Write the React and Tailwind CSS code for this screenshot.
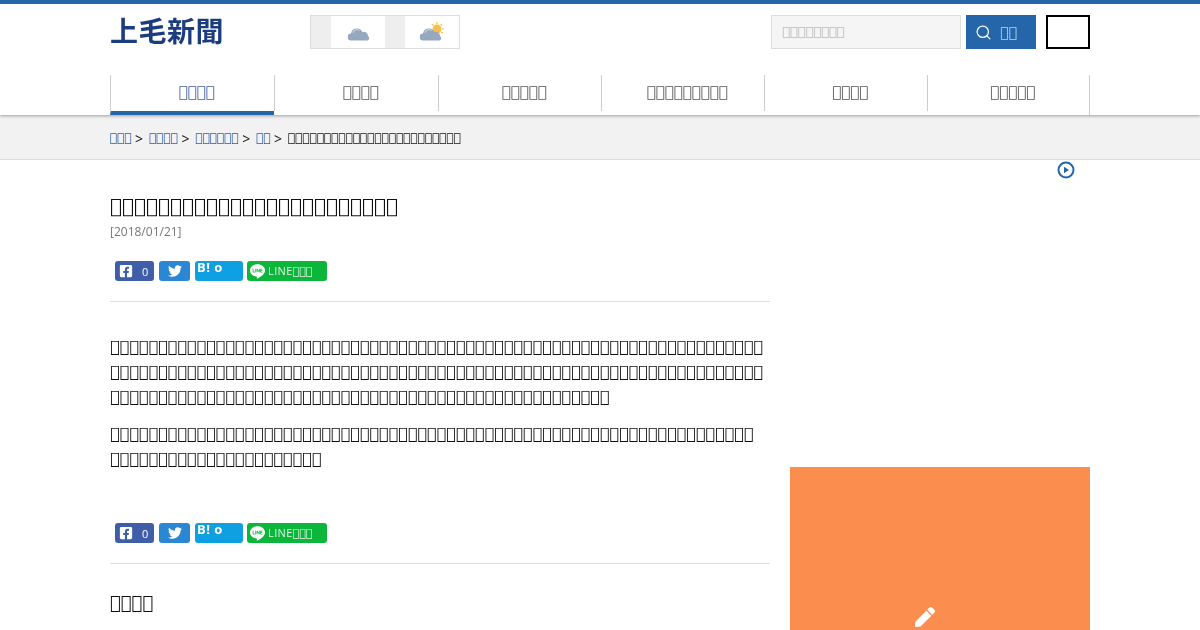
import React from 'react';
import { Search } from 'lucide-react';
import { FaFacebookSquare, FaTwitter, FaPen } from 'react-icons/fa';
import { SiLine } from 'react-icons/si';

// the page text shows as missing-glyph boxes, so each label is a run of them
const Box = ({ n }) => <span className="font-['DejaVu_Sans',sans-serif]">{'\uE000'.repeat(n)}</span>;

const navItems = [
    { count: 4, width: 'w-[164px]', active: true },
    { count: 4, width: 'w-[164px]' },
    { count: 5, width: 'w-[163px]' },
    { count: 9, width: 'w-[163px]' },
    { count: 4, width: 'w-[163px]' },
    { count: 5, width: 'w-[162px]' },
];

const crumbs = [3, 4, 6, 2];

const Cloud = ({ sun }) => (
    <svg width="26" height="20" viewBox="0 0 26 20">
        {sun && (
            <g>
                <circle cx="18" cy="7" r="4.5" fill="#f5c04a" />
                <path d="M18 0v2M23 2l-1.500 1.500M25 7h-2M13 2l1.500 1.500M24 11l-2-1" stroke="#f5c04a" strokeWidth="1.200" />
            </g>
        )}
        <path
            d="M4.500 18.500a3.500 3.500 0 0 1-.5-7 6 6 0 0 1 11.300-1.600 4.300 4.300 0 0 1 5.700 4.100 2.500 2.500 0 0 1-.5 4.500z"
            fill="#95a8bf"
        />
        <path d="M6 11a4 4 0 0 1 6.500-2.500" fill="none" stroke="#dfe6ee" strokeWidth="0.800" />
    </svg>
);

const ShareRow = () => (
    <div className="flex items-start h-5 ml-[5px]">
        <div className="flex items-center w-[39px] h-5 rounded-[3px] bg-[#3f5ea8] text-white pl-[3px]">
            <FaFacebookSquare className="ml-[1px] text-[14px]" />
            <span className="ml-[9px] text-[11px] leading-none">0</span>
        </div>
        <div className="flex items-center justify-center w-[31px] h-5 ml-[5px] rounded-[3px] bg-[#2b86d3] text-white">
            <FaTwitter className="text-[14px]" />
        </div>
        <div className="w-[48px] h-5 ml-[5px] rounded-[3px] bg-[#0fa0e2] text-white text-[13px] font-bold leading-[13px] pl-[2px] tracking-[0.5px]">
            B! o
        </div>
        <div className="flex items-center w-[80px] h-5 ml-[4px] rounded-[3px] bg-[#0bb63a] text-white pl-[3px]">
            <SiLine className="text-[15px]" />
            <span className="ml-[3px] text-[11px] leading-none text-[#dff5e4]">
                <span className="tracking-[0.4px]">LINE</span>
                <Box n={3} />
            </span>
        </div>
    </div>
);

const App = () => {
    return (
        <div className="h-[630px] overflow-hidden bg-white font-['Open_Sans',sans-serif] text-[#111]">
            <header className="border-t-4 border-[#2566ab] shadow-[0_1px_3px_rgba(0,0,0,0.35)] relative">
                <div className="w-[980px] mx-auto will-change-transform">
                    <div className="flex items-center h-[34px] mt-[11px]">
                        <div className="w-[200px] pb-[5px] font-['Noto_Sans_CJK_JP',sans-serif] text-[28px] font-bold leading-none tracking-[0.5px] text-[#1c3c80]">
                            上毛新聞
                        </div>
                        <div className="flex w-[150px] h-[34px] border border-[#ddd]">
                            <div className="w-5 bg-[#eee]" />
                            <div className="flex items-center justify-center w-[54px] pl-[4px]">
                                <Cloud />
                            </div>
                            <div className="w-5 bg-[#eee]" />
                            <div className="flex items-center justify-center w-[54px]">
                                <Cloud sun />
                            </div>
                        </div>
                        <div className="flex items-center w-[190px] h-[34px] ml-auto border border-[#ddd] bg-[#f5f5f5] pl-[10px] text-[13px] text-[#bbb]">
                            <Box n={8} />
                        </div>
                        <div className="flex items-center w-[70px] h-[34px] ml-[5px] bg-[#2566ab] pl-[9px] text-white">
                            <Search size={17} strokeWidth={1.800} />
                            <span className="ml-[8px] text-[14px] text-[#bcd6f2]">
                                <Box n={2} />
                            </span>
                        </div>
                        <div className="w-[44px] h-[34px] ml-[10px] border-2 border-black" />
                    </div>
                    <nav className="flex mt-[26px] h-10 w-fit border-r border-[#ccc]">
                        {navItems.map((item, i) => (
                            <div
                                key={i}
                                className={
                                    item.active
                                        ? `flex ${item.width} items-center justify-center h-10 pl-[8px] pb-[1px] border-l border-[#ccc] border-b-4 border-b-[#2566ab] text-[15px] text-[#3f5f9a]`
                                        : `flex ${item.width} items-center justify-center h-9 pl-[8px] pb-[2px] border-l border-[#ccc] text-[15px] text-[#555]`
                                }
                            >
                                <Box n={item.count} />
                            </div>
                        ))}
                    </nav>
                </div>
            </header>

            <div className="h-[45px] bg-[#f2f2f2] border-b border-[#ddd]">
                <div className="flex items-center gap-[3.5px] w-[980px] h-[44px] pt-[2px] mx-auto text-[12px] will-change-transform">
                    {crumbs.map((count, i) => (
                        <React.Fragment key={i}>
                            <span className={i === 0 ? 'text-[#2f5ba5] underline' : 'ml-[2.5px] text-[#2f5ba5] underline'}>
                                <Box n={count} />
                            </span>
                            <span className="text-[14px]">&gt;</span>
                        </React.Fragment>
                    ))}
                    <span className="ml-[2.5px]"><Box n={24} /></span>
                </div>
            </div>

            <main className="flex w-[980px] mx-auto">
                <article className="w-[660px] pt-[32px] will-change-transform">
                    <h1 className="text-[20px] leading-[28px] font-normal"><Box n={24} /></h1>
                    <div className="mt-[4px] text-[12px] leading-[16px] text-[#777]">[2018/01/21]</div>
                    <div className="mt-[21px]">
                        <ShareRow />
                    </div>
                    <div className="mt-[20px] border-b border-[#ddd]" />
                    <p className="mt-[32px] text-[16px] leading-[25px]">
                        <Box n={68} />
                        <br />
                        <Box n={68} />
                        <br />
                        <Box n={52} />
                    </p>
                    <p className="mt-[12px] text-[16px] leading-[25px]">
                        <Box n={67} />
                        <br />
                        <Box n={22} />
                    </p>
                    <div className="mt-[52px]">
                        <ShareRow />
                    </div>
                    <div className="mt-[20px] border-b border-[#ddd]" />
                    <h2 className="mt-[25px] text-[18px] leading-[26px] font-normal"><Box n={4} /></h2>
                </article>
                <aside className="w-[300px] ml-[20px]">
                    <div className="flex justify-end pr-[15px] pt-[1px]">
                        <svg width="18" height="18" viewBox="0 0 18 18">
                            <circle cx="9" cy="9" r="7.500" fill="none" stroke="#2566ab" strokeWidth="2" />
                            <path d="M7 5.800v6.400L12 9z" fill="#2566ab" />
                        </svg>
                    </div>
                    <div className="flex justify-center h-[300px] mt-[288px] pt-[140px] pr-[30px] bg-[#fb8d4f] text-white">
                        <FaPen className="text-[20px]" />
                    </div>
                </aside>
            </main>
        </div>
    );
};

export default App;
